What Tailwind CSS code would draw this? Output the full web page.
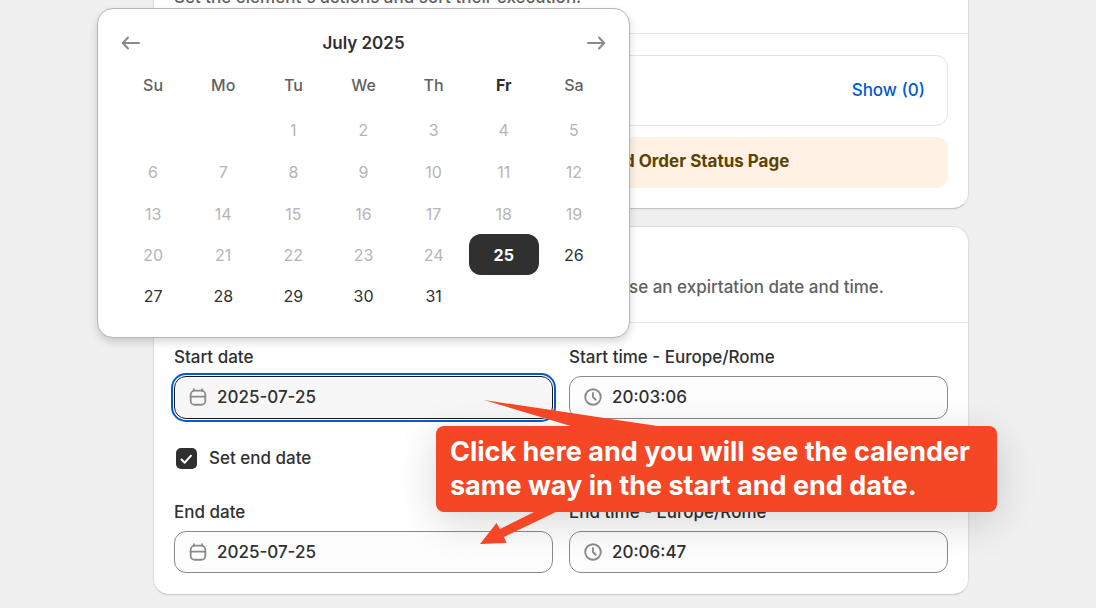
<!DOCTYPE html>
<html lang="en">
<head>
  <meta charset="UTF-8">
  <meta name="viewport" content="width=device-width, initial-scale=1.0">
  <title>Element settings</title>
  <script src="https://cdn.jsdelivr.net/npm/@tailwindcss/browser@4"></script>
</head>
<body class="bg-[#f0f0f0] font-['Inter',sans-serif] text-[17px] leading-6 font-medium text-[#303030] overflow-hidden">
  <div class="relative min-h-screen overflow-hidden">
    <main class="flex flex-col gap-[17px] pl-[153px] pr-[127px] pb-3">

      <!-- Actions -->
      <section class="-mt-4 rounded-b-2xl border border-[#dedede] border-b-[#c4c4c4] bg-white shadow-xs">
        <header class="border-b border-[#e8e8e8] px-5 pb-6">
          <p class="text-[#616161]">Set the element's actions and sort their execution.</p>
        </header>
        <div class="flex flex-col gap-[11px] px-5 pt-[21px] pb-5">
          <div class="flex justify-end rounded-xl border border-[#e3e3e3] px-[22px] pt-[22px] pb-[23px]">
            <a href="#" class="text-[#005bd3]">Show (0)</a>
          </div>
          <div class="rounded-xl bg-[#fff1e3] pt-3 pb-[15px] pl-[450px]">
            <p class="font-bold text-[#5e4200]">d Order Status Page</p>
          </div>
        </div>
      </section>

      <!-- Expiration -->
      <section class="rounded-2xl border border-[#dedede] border-b-[#cccccc] bg-white shadow-xs">
        <header class="border-b border-[#e8e8e8] px-5 pt-12 pb-[23px]">
          <p class="pl-[455px] text-[#616161]">se an expirtation date and time.</p>
        </header>
        <form class="grid grid-cols-2 gap-x-4 px-5 pt-[22px] pb-[21px]">
          <div>
            <label for="start-date" class="block pb-[7px]">Start date</label>
            <div class="flex h-[43px] items-center gap-2 rounded-xl border border-[#1a1a1a] bg-[#f7f7f7] px-3 pb-px outline-2 outline-offset-1 outline-[#005bd3]">
              <svg class="size-6 text-[#8a8a8a]" viewBox="0 0 24 24" fill="none" stroke="currentColor" stroke-width="2" stroke-linecap="round"><rect x="4" y="5" width="16" height="15.500" rx="4.500"/><path d="M4 11.500h16M7.500 3.500v1.500M16.500 3.500v1.500"/></svg>
              <input id="start-date" type="text" value="2025-07-25" class="w-full bg-transparent outline-none">
            </div>
          </div>
          <div>
            <label for="start-time" class="block pb-[7px]">Start time - Europe/Rome</label>
            <div class="flex h-[43px] items-center gap-2 rounded-xl border border-[#8a8a8a] bg-[#fdfdfd] px-3 pb-px">
              <svg class="size-6 text-[#8a8a8a]" viewBox="0 0 24 24" fill="none" stroke="currentColor" stroke-width="2" stroke-linecap="round" stroke-linejoin="round"><circle cx="12" cy="12" r="8.500"/><path d="M12 7.500v4.500l3 3"/></svg>
              <input id="start-time" type="text" value="20:03:06" class="w-full bg-transparent outline-none">
            </div>
          </div>
          <div class="col-span-2 flex items-center gap-3 pt-[27px] pb-[30px] pl-[2px]">
            <span class="grid size-[21px]">
              <input id="set-end" type="checkbox" checked class="col-start-1 row-start-1 size-[21px] appearance-none rounded-[5px] bg-[#303030]">
              <svg class="pointer-events-none col-start-1 row-start-1 size-[21px]" viewBox="0 0 21 21" fill="none" stroke="#fff" stroke-width="2" stroke-linecap="round" stroke-linejoin="round"><path d="M5.500 11.500l3.200 3.200 6.300-7"/></svg>
            </span>
            <label for="set-end">Set end date</label>
          </div>
          <div>
            <label for="end-date" class="block pb-[7px]">End date</label>
            <div class="flex h-[42px] items-center gap-2 rounded-xl border border-[#8a8a8a] bg-[#fdfdfd] px-3">
              <svg class="size-6 text-[#8a8a8a]" viewBox="0 0 24 24" fill="none" stroke="currentColor" stroke-width="2" stroke-linecap="round"><rect x="4" y="5" width="16" height="15.500" rx="4.500"/><path d="M4 11.500h16M7.500 3.500v1.500M16.500 3.500v1.500"/></svg>
              <input id="end-date" type="text" value="2025-07-25" class="w-full bg-transparent outline-none">
            </div>
          </div>
          <div>
            <label for="end-time" class="block pb-[7px]">End time - Europe/Rome</label>
            <div class="flex h-[42px] items-center gap-2 rounded-xl border border-[#8a8a8a] bg-[#fdfdfd] px-3">
              <svg class="size-6 text-[#8a8a8a]" viewBox="0 0 24 24" fill="none" stroke="currentColor" stroke-width="2" stroke-linecap="round" stroke-linejoin="round"><circle cx="12" cy="12" r="8.500"/><path d="M12 7.500v4.500l3 3"/></svg>
              <input id="end-time" type="text" value="20:06:47" class="w-full bg-transparent outline-none">
            </div>
          </div>
        </form>
      </section>
    </main>

    <!-- Date picker popover -->
    <div class="absolute top-2 left-[97px] w-[533px] rounded-2xl border border-[#b5b5b5] bg-white px-5 pt-4 pb-5 shadow-[0_4px_8px_rgba(0,0,0,0.16)]">
      <div class="flex h-[35px] items-center justify-between">
        <button type="button" aria-label="Previous month" class="grid size-[26px] place-items-center text-[#8a8a8a]">
          <svg class="size-5" viewBox="0 0 20 20" fill="none" stroke="currentColor" stroke-width="2" stroke-linecap="round" stroke-linejoin="round"><path d="M18 10H2M7 4.500L1.800 10L7 15.500"/></svg>
        </button>
        <h2 class="font-semibold">July 2025</h2>
        <button type="button" aria-label="Next month" class="grid size-[26px] place-items-center text-[#8a8a8a]">
          <svg class="size-5" viewBox="0 0 20 20" fill="none" stroke="currentColor" stroke-width="2" stroke-linecap="round" stroke-linejoin="round"><path d="M2 10h16M13 4.500L18.200 10L13 15.500"/></svg>
        </button>
      </div>
      <table class="w-full table-fixed text-center text-base font-normal text-[#b5b5b5]">
        <thead class="text-[#616161]">
          <tr class="h-[49px]">
            <th class="font-medium">Su</th><th class="font-medium">Mo</th><th class="font-medium">Tu</th><th class="font-medium">We</th><th class="font-medium">Th</th><th class="font-bold text-[#303030]">Fr</th><th class="font-medium">Sa</th>
          </tr>
        </thead>
        <tbody>
          <tr class="h-[42px]"><td></td><td></td><td>1</td><td>2</td><td>3</td><td>4</td><td>5</td></tr>
          <tr class="h-[42px]"><td>6</td><td>7</td><td>8</td><td>9</td><td>10</td><td>11</td><td>12</td></tr>
          <tr class="h-[41px]"><td>13</td><td>14</td><td>15</td><td>16</td><td>17</td><td>18</td><td>19</td></tr>
          <tr class="h-[41px]">
            <td>20</td><td>21</td><td>22</td><td>23</td><td>24</td>
            <td><button type="button" class="block h-[41px] w-full rounded-xl bg-[#303030] font-bold text-white">25</button></td>
            <td class="text-[#303030]">26</td>
          </tr>
          <tr class="h-[42px] text-[#303030]"><td>27</td><td>28</td><td>29</td><td>30</td><td>31</td><td></td><td></td></tr>
        </tbody>
      </table>
    </div>

    <!-- Callout -->
    <div class="absolute top-[426px] left-[436px] w-[561px] rounded-lg bg-[#f54725] px-[14px] py-[9px] shadow-[0_10px_40px_rgba(0,0,0,0.16)]">
      <svg class="absolute top-[-30px] left-10 h-[160px] w-[200px]" viewBox="476 396 200 160" fill="#f54725"><path d="M484 400L664 427H574Z"/><path d="M480 544L496.500 523L500 529L538 510H560L504 537L506.500 543Z"/></svg>
      <p class="relative whitespace-nowrap text-[27px] leading-[34px] font-bold text-white">Click here and you will see the calender<br>same way in the start and end date.</p>
    </div>
  </div>
</body>
</html>
